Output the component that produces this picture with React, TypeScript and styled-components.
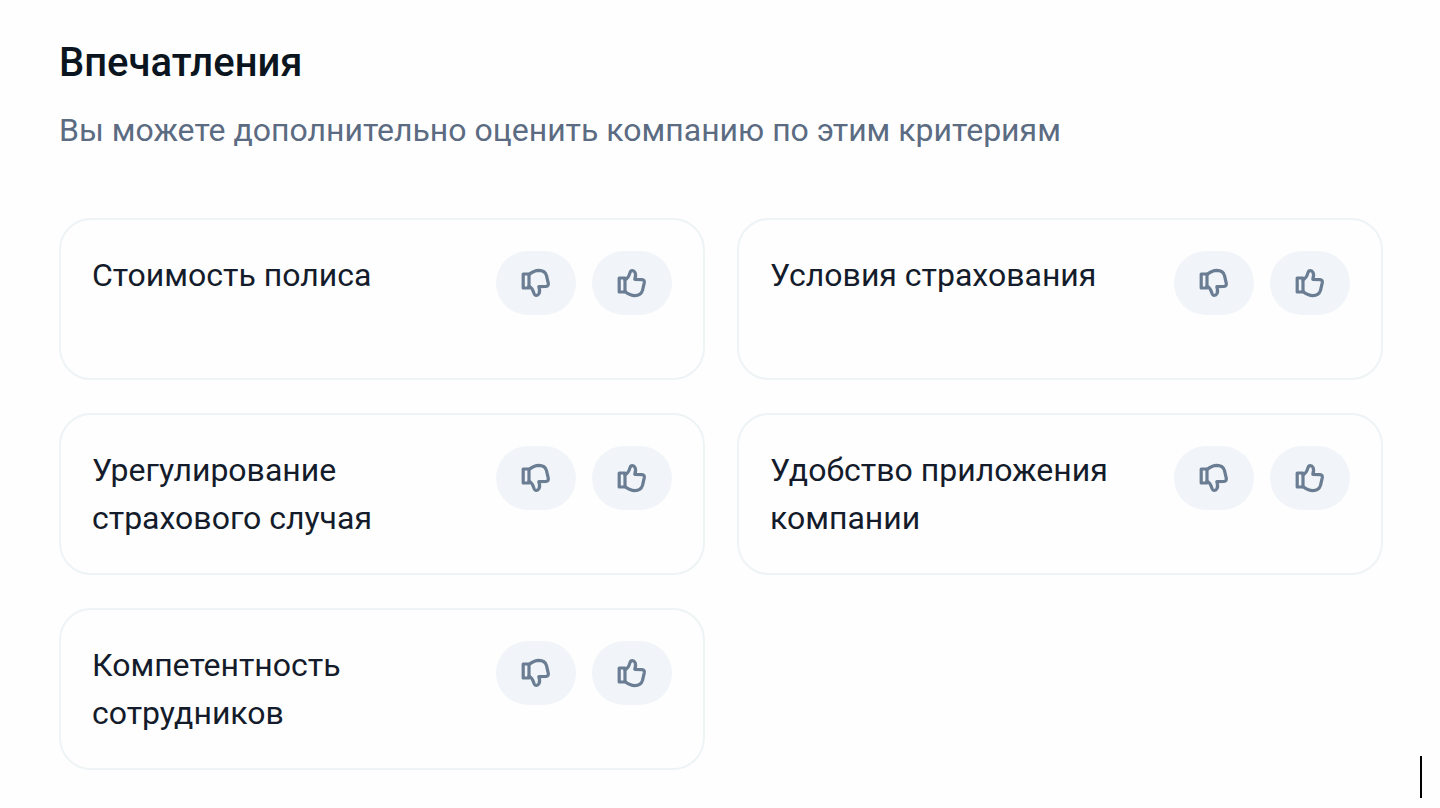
import React from "react";
import styled, { createGlobalStyle } from "styled-components";

const GlobalStyle = createGlobalStyle`
  *, *::before, *::after { box-sizing: border-box; }
  body {
    margin: 0;
    background: #fefefe;
    color: #101828;
    font-family: Roboto, "Liberation Sans", sans-serif;
  }
`;

const Page = styled.main`
  position: relative;
  min-height: 100vh;
  padding: 39px 57px 32px 59px;
`;

const Title = styled.h1`
  margin: 0;
  font-size: 40px;
  line-height: 48px;
  font-weight: 500;
  color: #0b1520;
`;

const Subtitle = styled.p`
  margin: 19px 0 64px;
  font-size: 32px;
  line-height: 48px;
  color: #5b6b82;
`;

const Grid = styled.ul`
  display: grid;
  grid-template-columns: repeat(2, minmax(0, 1fr));
  gap: 33px 32px;
  margin: 0;
  padding: 0;
  list-style: none;
`;

const Card = styled.li`
  display: flex;
  align-items: flex-start;
  justify-content: space-between;
  gap: 16px;
  min-height: 162px;
  padding: 31px;
  border: 2px solid #eef3f5;
  border-radius: 32px;
`;

const Label = styled.span`
  max-width: 360px;
  font-size: 32px;
  line-height: 48px;
  color: #141c2b;
`;

const Actions = styled.div`
  display: flex;
  flex: none;
  gap: 16px;
`;

const VoteButton = styled.button`
  display: flex;
  align-items: center;
  justify-content: center;
  width: 80px;
  height: 64px;
  padding: 0;
  border: 0;
  border-radius: 32px;
  background: #f1f5f9;
  color: #6a7d93;
  cursor: pointer;
`;

const Icon = styled.svg`
  display: block;
  width: 32px;
  height: 32px;
  fill: none;
  stroke: currentColor;
  stroke-width: 3.2;
  stroke-linejoin: round;
  stroke-linecap: round;
`;

const Caret = styled.div`
  position: absolute;
  right: 18px;
  bottom: 10px;
  width: 2px;
  height: 42px;
  background: #000;
`;

const ThumbUp = () => (
  <Icon viewBox="0 0 32 32" aria-hidden="true">
    <path d="M3.2 11H9V25H3.2Z" />
    <path d="M9 12.8C11.8 11.6 13 9.2 14 5.6C14.8 3 17.8 3 19 5.4C20 7.4 19.7 9.8 18.8 12.3L26 12.6C27.8 12.8 28.6 14 28.3 15.6L26.5 23.4C25.4 27 22.6 28.6 18.8 28.6C14.6 28.5 12.2 27 9 24.4" />
  </Icon>
);

const ThumbDown = () => (
  <Icon viewBox="0 0 32 32" aria-hidden="true">
    <path d="M3.2 7H9V21H3.2Z" />
    <path d="M9 19.2C11.8 20.4 13 22.8 14 26.4C14.8 29 17.8 29 19 26.6C20 24.6 19.7 22.2 18.8 19.7L26 19.4C27.8 19.2 28.6 18 28.3 16.4L26.5 8.6C25.4 5 22.6 3.4 18.8 3.4C14.6 3.5 12.2 5 9 7.6" />
  </Icon>
);

const criteria = [
  "Стоимость полиса",
  "Условия страхования",
  "Урегулирование страхового случая",
  "Удобство приложения компании",
  "Компетентность сотрудников",
];

export default function App() {
  return (
    <Page>
      <GlobalStyle />
      <Title>Впечатления</Title>
      <Subtitle>Вы можете дополнительно оценить компанию по этим критериям</Subtitle>
      <Grid>
        {criteria.map((name) => (
          <Card key={name}>
            <Label>{name}</Label>
            <Actions role="group" aria-label={name}>
              <VoteButton type="button" aria-label="Не нравится">
                <ThumbDown />
              </VoteButton>
              <VoteButton type="button" aria-label="Нравится">
                <ThumbUp />
              </VoteButton>
            </Actions>
          </Card>
        ))}
      </Grid>
      <Caret />
    </Page>
  );
}
